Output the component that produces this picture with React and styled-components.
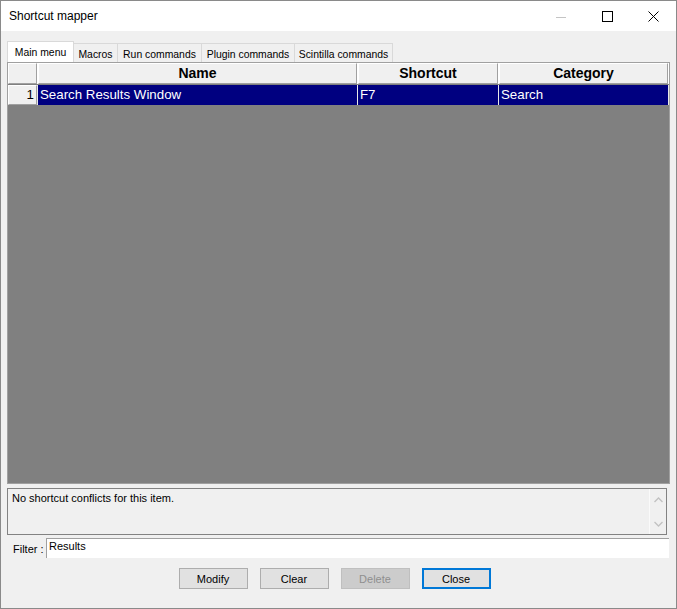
import React from "react";
import styled, { createGlobalStyle } from "styled-components";

const Global = createGlobalStyle`
  html, body { margin: 0; padding: 0; background: #ffffff; }
  * { box-sizing: border-box; }
`;

const UI = `"Liberation Sans", Arial, sans-serif`;

const Window = styled.div`
  width: 677px;
  height: 609px;
  border: 1px solid #8a8a8a;
  display: flex;
  flex-direction: column;
  font-family: ${UI};
  color: #000;
  overflow: hidden;
`;

const TitleBar = styled.div`
  height: 30px;
  background: #ffffff;
  display: flex;
  align-items: center;
  flex-shrink: 0;
`;

const Title = styled.div`
  flex: 1;
  padding-left: 8px;
  font-size: 12px;
  line-height: 14px;
  padding-bottom: 1px;
`;

const Controls = styled.div`
  display: flex;
  height: 100%;
`;

const CtrlBtn = styled.div`
  width: 46px;
  height: 100%;
  display: flex;
  align-items: center;
  justify-content: center;
  padding-top: 1px;
`;

const Body = styled.div`
  flex: 1;
  background: #f0f0f0;
  padding: 10px 6px 0 6px;
  display: flex;
  flex-direction: column;
`;

const TabStrip = styled.div`
  display: flex;
  align-items: flex-end;
  height: 21px;
`;

const Tab = styled.div`
  width: ${(p) => p.$w}px;
  height: ${(p) => (p.$active ? 21 : 19)}px;
  margin-left: ${(p) => (p.$first ? 0 : -1)}px;
  border: 1px solid #d9d9d9;
  border-bottom: none;
  background: ${(p) => (p.$active ? "#ffffff" : "#f0f0f0")};
  position: relative;
  z-index: ${(p) => (p.$active ? 1 : 0)};
  font-size: 10.4px;
  line-height: 12px;
  padding-top: 4.5px;
  text-align: center;
  white-space: nowrap;
`;

const GridFrame = styled.div`
  height: 422px;
  border: 1px solid #a0a0a0;
  background: #808080;
  display: flex;
  flex-direction: column;
`;

const COLS = "29px 319px 140px 169px";

const HeaderRow = styled.div`
  display: grid;
  grid-template-columns: ${COLS};
  column-gap: 1px;
  height: 21px;
  background: #ffffff;
  width: 661px;
`;

const HeadCell = styled.div`
  background: #f0f0f0;
  border: 1px solid;
  border-color: #ffffff #a0a0a0 #a0a0a0 #ffffff;
  font-weight: bold;
  font-size: 14px;
  line-height: 18px;
  padding-bottom: 1px;
  text-align: center;
  white-space: nowrap;
  overflow: hidden;
`;

const DataRow = styled.div`
  display: grid;
  grid-template-columns: ${COLS};
  column-gap: 1px;
  height: 20px;
  margin-top: 1px;
  background: #e8e8e8;
  width: 661px;
`;

const RowHead = styled.div`
  background: #f0f0f0;
  border: 1px solid;
  border-color: #ffffff #a0a0a0 #a0a0a0 #ffffff;
  font-size: 13.3px;
  line-height: 18px;
  text-align: right;
  padding-right: 2px;
`;

const Cell = styled.div`
  background: #000080;
  color: #ffffff;
  font-size: 13.3px;
  line-height: 20px;
  padding-left: 2px;
  white-space: nowrap;
  overflow: hidden;
`;

const MessageBox = styled.div`
  margin-top: 4px;
  margin-right: 3px;
  height: 47px;
  border: 1px solid #828282;
  display: flex;
`;

const MessageText = styled.div`
  flex: 1;
  font-size: 11px;
  line-height: 13px;
  padding: 3px 4px;
`;

const ScrollBar = styled.div`
  width: 17px;
  border-left: 1px solid #fafafa;
  display: flex;
  flex-direction: column;
  align-items: center;
  justify-content: space-between;
  padding: 8px 0 7px 0;
`;

const FilterRow = styled.div`
  margin-top: 3px;
  margin-right: 1px;
  display: flex;
  align-items: center;
  height: 20px;
`;

const FilterLabel = styled.div`
  width: 39px;
  padding-left: 6px;
  font-size: 11px;
  line-height: 15px;
  padding-top: 2px;
  white-space: nowrap;
`;

const FilterInput = styled.div`
  flex: 1;
  height: 20px;
  background: #ffffff;
  border-top: 1px solid #a0a0a0;
  border-left: 1px solid #a0a0a0;
  font-size: 11px;
  line-height: 15px;
  padding-left: 2px;
`;

const ButtonRow = styled.div`
  margin-top: 10px;
  display: flex;
  justify-content: center;
  gap: 12px;
  padding-right: 8px;
`;

const Button = styled.div`
  width: 69px;
  height: 21px;
  background: ${(p) => (p.$disabled ? "#cccccc" : "#e1e1e1")};
  border: ${(p) => (p.$default ? "2px solid #0078d7" : p.$disabled ? "1px solid #bfbfbf" : "1px solid #adadad")};
  color: ${(p) => (p.$disabled ? "#8f8f8f" : "#000")};
  font-size: 11px;
  display: flex;
  align-items: center;
  justify-content: center;
`;

const Chevron = ({ up }) => (
  <svg width="9" height="6" viewBox="0 0 9 6">
    <polyline
      points={up ? "0.5,5 4.5,1 8.5,5" : "0.5,1 4.5,5 8.5,1"}
      fill="none"
      stroke="#c2c2c2"
      strokeWidth="1.3"
    />
  </svg>
);

const tabs = [
  { label: "Main menu", w: 67, active: true },
  { label: "Macros", w: 45 },
  { label: "Run commands", w: 85 },
  { label: "Plugin commands", w: 94 },
  { label: "Scintilla commands", w: 99 },
];

export default function App() {
  return (
    <>
      <Global />
      <Window>
        <TitleBar>
          <Title>Shortcut mapper</Title>
          <Controls>
            <CtrlBtn>
              <svg width="10" height="10" viewBox="0 0 10 10">
                <line x1="0" y1="5.5" x2="10" y2="5.5" stroke="#c4c4c4" strokeWidth="1" />
              </svg>
            </CtrlBtn>
            <CtrlBtn>
              <svg width="11" height="11" viewBox="0 0 11 11">
                <rect x="0.5" y="0.5" width="10" height="10" fill="none" stroke="#000" strokeWidth="1" />
              </svg>
            </CtrlBtn>
            <CtrlBtn>
              <svg width="11" height="11" viewBox="0 0 11 11">
                <path d="M0.5 0.5 L10.5 10.5 M10.5 0.5 L0.5 10.5" stroke="#000" strokeWidth="1" fill="none" />
              </svg>
            </CtrlBtn>
          </Controls>
        </TitleBar>
        <Body>
          <TabStrip>
            {tabs.map((t, i) => (
              <Tab key={t.label} $w={t.w} $active={t.active} $first={i === 0}>
                {t.label}
              </Tab>
            ))}
          </TabStrip>
          <GridFrame>
            <HeaderRow>
              <HeadCell />
              <HeadCell>Name</HeadCell>
              <HeadCell>Shortcut</HeadCell>
              <HeadCell>Category</HeadCell>
            </HeaderRow>
            <DataRow>
              <RowHead>1</RowHead>
              <Cell>Search Results Window</Cell>
              <Cell>F7</Cell>
              <Cell>Search</Cell>
            </DataRow>
          </GridFrame>
          <MessageBox>
            <MessageText>No shortcut conflicts for this item.</MessageText>
            <ScrollBar>
              <Chevron up />
              <Chevron />
            </ScrollBar>
          </MessageBox>
          <FilterRow>
            <FilterLabel>Filter :</FilterLabel>
            <FilterInput>Results</FilterInput>
          </FilterRow>
          <ButtonRow>
            <Button>Modify</Button>
            <Button>Clear</Button>
            <Button $disabled>Delete</Button>
            <Button $default>Close</Button>
          </ButtonRow>
        </Body>
      </Window>
    </>
  );
}
